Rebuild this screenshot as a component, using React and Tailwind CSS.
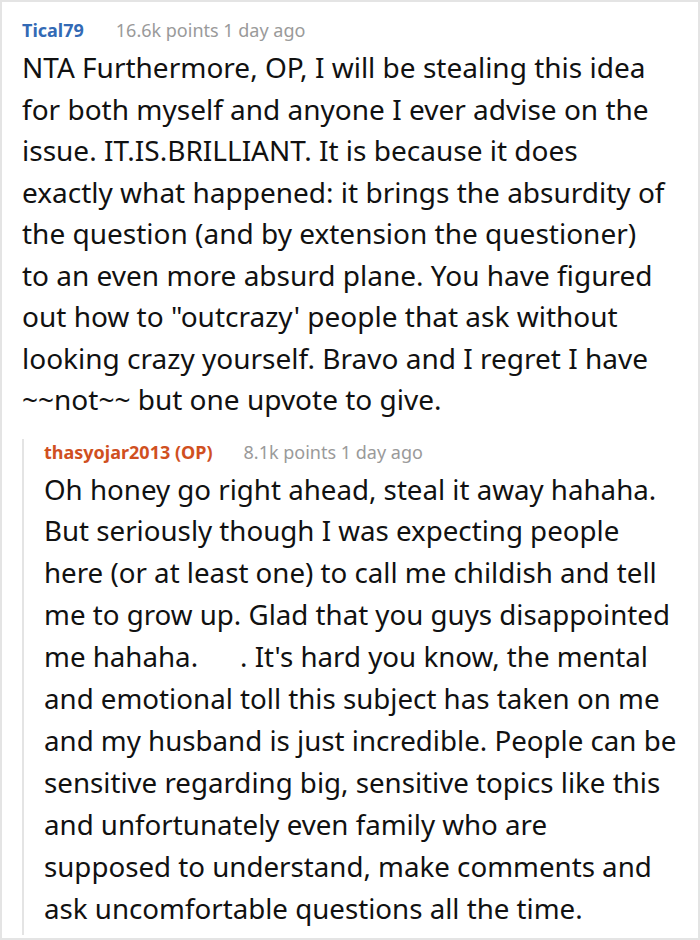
export default function App() {
  const font = { fontFamily: '"Noto Sans", "Open Sans", sans-serif' };
  const top = [
    "NTA Furthermore, OP, I will be stealing this idea",
    "for both myself and anyone I ever advise on the",
    "issue. IT.IS.BRILLIANT. It is because it does",
    "exactly what happened: it brings the absurdity of",
    "the question (and by extension the questioner)",
    "to an even more absurd plane. You have figured",
    "out how to \"outcrazy' people that ask without",
    "looking crazy yourself. Bravo and I regret I have",
    "~~not~~ but one upvote to give.",
  ];
  const reply = [
    "Oh honey go right ahead, steal it away hahaha.",
    "But seriously though I was expecting people",
    "here (or at least one) to call me childish and tell",
    "me to grow up. Glad that you guys disappointed",
    null,
    "and emotional toll this subject has taken on me",
    "and my husband is just incredible. People can be",
    "sensitive regarding big, sensitive topics like this",
    "and unfortunately even family who are",
    "supposed to understand, make comments and",
    "ask uncomfortable questions all the time.",
  ];
  return (
    <div className="w-[700px] h-[940px] bg-white border-2 border-[#e4e4e4] overflow-hidden" style={font}>
      <div className="pl-[20px] pr-[4px]">
        <div className="flex items-center h-[28px] mt-[14px] text-[18px]">
          <span className="font-bold text-[#336ab5]">Tical79</span>
          <span className="ml-[32px] text-[#9a9a9a]">16.6k points 1 day ago</span>
        </div>
        <div className="mt-[3px] text-[28px] leading-[41.5px] text-[#111] whitespace-nowrap">
          {top.map((l, i) => (
            <div key={i}>{l}</div>
          ))}
        </div>
        <div className="mt-[18px] border-l-2 border-[#e4e4e4] pl-[20px] pt-[0px] pb-[6px]">
          <div className="flex items-center h-[28px] text-[18px]">
            <span className="font-bold text-[#d0501f]">thasyojar2013 (OP)</span>
            <span className="ml-[31px] text-[#9a9a9a]">8.1k points 1 day ago</span>
          </div>
          <div className="mt-[2px] text-[27.7px] leading-[41.9px] text-[#111] whitespace-nowrap">
            {reply.map((l, i) =>
              l === null ? (
                <div key={i}>
                  me hahaha.<span className="inline-block w-[42px]"></span>. It's hard you know, the mental
                </div>
              ) : (
                <div key={i}>{l}</div>
              )
            )}
          </div>
        </div>
      </div>
    </div>
  );
}
